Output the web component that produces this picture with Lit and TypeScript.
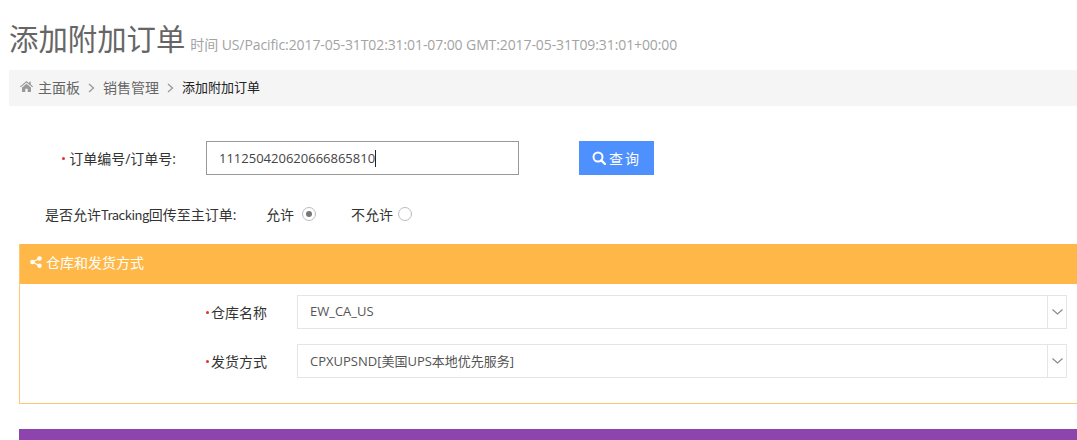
import { LitElement, html, css, svg } from "lit";
import { customElement } from "lit/decorators.js";

const chevron = svg`<svg class="sep" width="7" height="10" viewBox="0 0 7 10"><path d="M1 1l4.500 4-4.500 4" fill="none" stroke="#999" stroke-width="1.300"/></svg>`;

@customElement("app-root")
export class AppRoot extends LitElement {
  static styles = css`
    :host {
      display: block;
      width: 1077px;
      height: 440px;
      overflow: hidden;
      background: #fff;
      font-family: "Open Sans", "Noto Sans CJK SC", sans-serif;
      font-size: 13px;
      color: #333;
    }
    .page { padding: 0 0 0 9px; }
    .head {
      height: 70px;
      display: flex;
      align-items: flex-end;
      gap: 5px;
      padding-bottom: 11px;
      box-sizing: border-box;
      color: #666;
    }
    .title { font-size: 29.4px; line-height: 40px; font-weight: 400; color: #666; }
    .sub { font-size: 14px; line-height: 20px; color: #a3a3a3; padding-bottom: 4px; letter-spacing: -0.1px; }
    .crumbs {
      height: 36px;
      background: #f5f5f5;
      display: flex;
      align-items: center;
      padding: 0 0 3px 11px;
      box-sizing: border-box;
      font-size: 14px;
      color: #666;
    }
    .crumbs .home { margin-right: 5px; }
    .sep { margin: 2px 8px 0; }
    .crumbs .cur { color: #222; font-size: 13px; }
    .query {
      display: flex;
      align-items: center;
      height: 34px;
      margin-top: 35px;
    }
    label { font-size: 14px; color: #333; }
    label.q { width: 167px; padding-right: 30px; display: flex; align-items: center; justify-content: flex-end; white-space: nowrap; }
    .req { display: inline-block; width: 3px; height: 3px; border-radius: 50%; background: #e5302a; margin-right: 2px; }
    .query .req { margin-right: 4px; }
    .inp {
      width: 313px;
      height: 34px;
      box-sizing: border-box;
      border: 1px solid #999;
      display: flex;
      align-items: center;
      padding-left: 12px;
      font-size: 13px;
      color: #444;
    }
    .caret { display: inline-block; width: 1px; height: 17px; background: #222; }
    .btn {
      width: 75px;
      height: 34px;
      margin-left: 60px;
      background: #4d90fe;
      color: #fff;
      display: flex;
      align-items: center;
      justify-content: center;
      gap: 3px;
      font-size: 14px;
      letter-spacing: 2px;
    }
    .radios {
      display: flex;
      align-items: center;
      height: 20px;
      margin-top: 29px;
      padding-left: 36px;
      font-size: 14px;
      color: #333;
    }
    .radios .lab { width: 221px; white-space: nowrap; }
    .radios .lat { font-family: "Noto Sans CJK SC", sans-serif; font-size: 13px; letter-spacing: -0.5px; }
    .opt { display: flex; align-items: center; gap: 8px; }
    .opt + .opt { margin-left: 35px; gap: 5px; }
    .radio {
      width: 14px;
      height: 14px;
      border-radius: 50%;
      border: 1px solid #bbb;
      box-sizing: border-box;
      display: flex;
      align-items: center;
      justify-content: center;
    }
    .radio i { width: 6px; height: 6px; border-radius: 50%; background: #777; }
    .panel {
      margin: 20px 0 0 10px;
      border: 1px solid #ffc774;
      border-right: none;
      height: 160px;
      box-sizing: border-box;
      background: #fff;
    }
    .panel-h {
      height: 40px;
      background: #ffb848;
      margin: -1px 0 0 0;
      display: flex;
      align-items: center;
      padding: 0 0 4px 10px;
      box-sizing: border-box;
      gap: 4px;
      color: #fff;
      font-size: 14px;
    }
    .rows { display: flex; flex-direction: column; gap: 15px; padding-top: 11px; }
    .row { display: flex; align-items: center; height: 34px; }
    .row label { width: 277px; padding-right: 30px; box-sizing: border-box; display: flex; align-items: center; justify-content: flex-end; }
    .sel {
      width: 770px;
      height: 34px;
      box-sizing: border-box;
      border: 1px solid #e5e5e5;
      display: flex;
      align-items: stretch;
      color: #555;
      font-size: 13px;
    }
    .sel .v { flex: 1; padding: 0 0 2px 12px; display: flex; align-items: center; }
    .sel .arr {
      width: 18px;
      border-left: 1px solid #e5e5e5;
      display: flex;
      align-items: center;
      justify-content: center;
    }
    .bar { height: 20px; margin: 25px 0 0 10px; background: #8e44ad; }
    svg { display: block; flex: none; }
  `;

  private arrow() {
    return html`<span class="arr"><svg width="11" height="6" viewBox="0 0 11 6"><path d="M.5.5l5 4.500 5-4.500" fill="none" stroke="#888" stroke-width="1.100"/></svg></span>`;
  }

  render() {
    return html`
      <div class="page">
        <div class="head">
          <span class="title">添加附加订单</span>
          <span class="sub">时间 US/Pacific:2017-05-31T02:31:01-07:00 GMT:2017-05-31T09:31:01+00:00</span>
        </div>
        <div class="crumbs">
          <svg class="home" width="13" height="11" viewBox="0 0 13 11"><path d="M6.500 0L0 5.500l.7.800L6.500 1.500l5.800 4.800.7-.8L10.800 3.600V.8H9.200v1.400zM2 6.500V11h3.300V7.700h2.400V11H11V6.500L6.500 2.700z" fill="#999"/></svg>
          <span>主面板</span>${chevron}<span>销售管理</span>${chevron}<span class="cur">添加附加订单</span>
        </div>
        <div class="query">
          <label class="q"><span class="req"></span>订单编号/订单号:</label>
          <div class="inp"><span>111250420620666865810</span><span class="caret"></span></div>
          <div class="btn">
            <svg width="14" height="14" viewBox="0 0 14 14"><circle cx="6" cy="6" r="4.500" fill="none" stroke="#fff" stroke-width="2"/><path d="M9.300 9.300L13 13" stroke="#fff" stroke-width="2.400" stroke-linecap="round"/></svg>
            <span>查询</span>
          </div>
        </div>
        <div class="radios">
          <span class="lab">是否允许<span class="lat">Tracking</span>回传至主订单:</span>
          <span class="opt">允许<span class="radio"><i></i></span></span>
          <span class="opt">不允许<span class="radio"></span></span>
        </div>
        <div class="panel">
          <div class="panel-h">
            <svg width="12" height="12" viewBox="0 0 12 12"><g fill="#fff"><circle cx="2.500" cy="6" r="2.300"/><circle cx="9.500" cy="2.500" r="2.300"/><circle cx="9.500" cy="9.800" r="2.200"/></g><path d="M2.500 6l7-3.500M2.500 6l7 3.800" stroke="#fff" stroke-width="1.200"/></svg>
            <span>仓库和发货方式</span>
          </div>
          <div class="rows">
            <div class="row">
              <label><span class="req"></span>仓库名称</label>
              <div class="sel"><span class="v">EW_CA_US</span>${this.arrow()}</div>
            </div>
            <div class="row">
              <label><span class="req"></span>发货方式</label>
              <div class="sel"><span class="v">CPXUPSND[美国UPS本地优先服务]</span>${this.arrow()}</div>
            </div>
          </div>
        </div>
        <div class="bar"></div>
      </div>
    `;
  }
}
